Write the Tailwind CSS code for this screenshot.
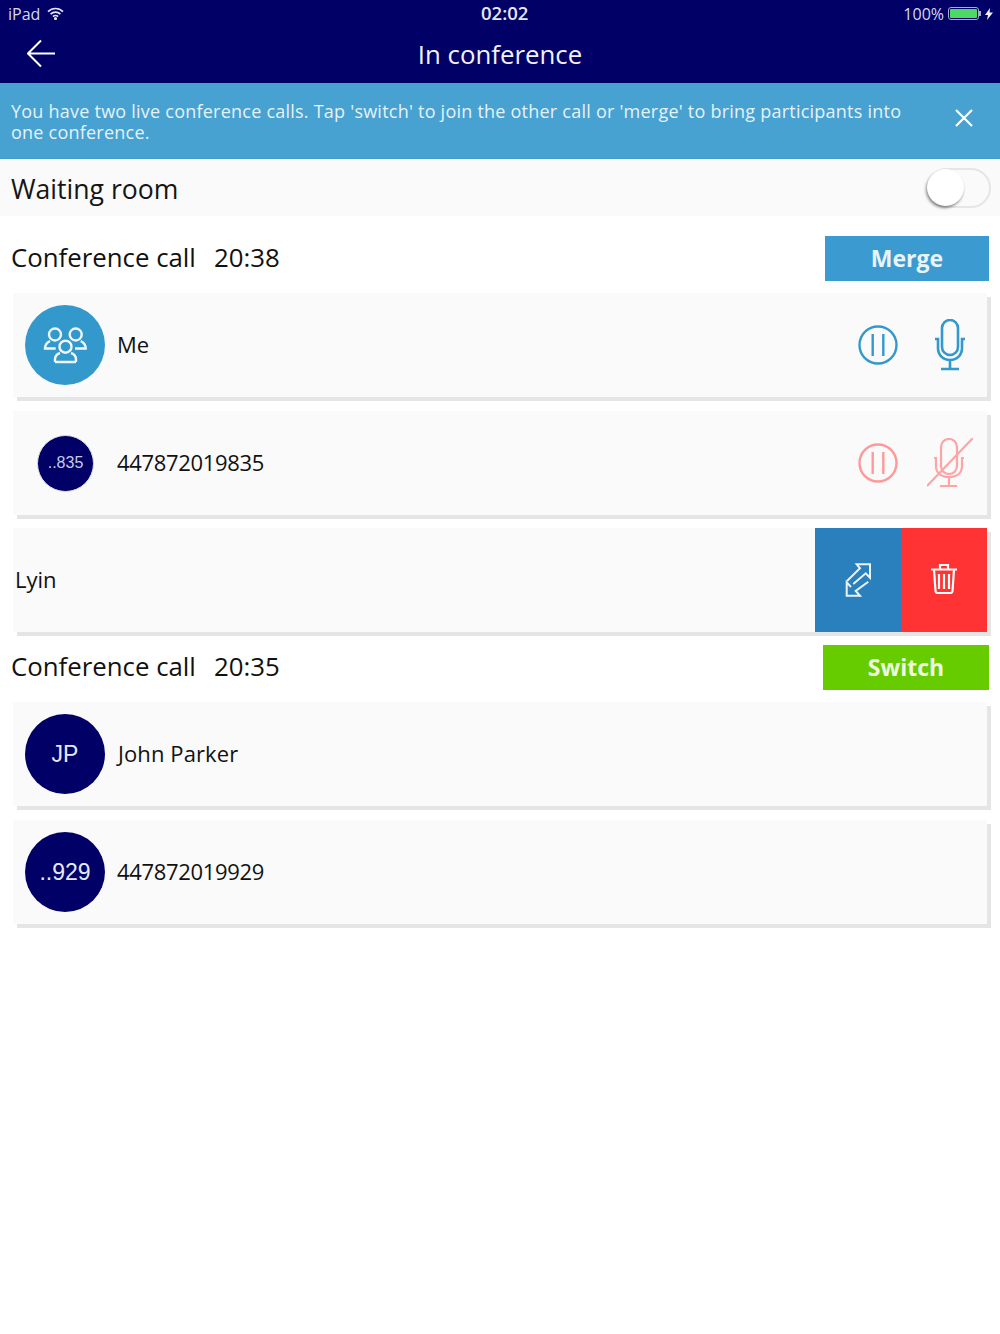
<!DOCTYPE html>
<html lang="en">
<head>
    <meta charset="UTF-8">
    <meta name="viewport" content="width=device-width, initial-scale=1.0">
    <title>In conference</title>
    <script src="https://cdn.jsdelivr.net/npm/@tailwindcss/browser@4"></script>
</head>
<body class="bg-white font-['Open_Sans',sans-serif] text-[#111]">
    <div class="w-[1000px] h-[1334px] overflow-hidden">
        <!-- header -->
        <div class="bg-[#000066] h-[83px] text-white">
            <div class="relative h-[27px] flex items-center justify-between pl-[8px] pr-[7px]">
                <div class="flex items-center gap-[7px] text-[16px] text-[#d8d8ea]">
                    <span>iPad</span>
                    <svg width="17" height="13" viewBox="0 0 17 13" fill="none" stroke="#e4e4f2" stroke-width="1.7"><path d="M1 4.6a10.6 10.6 0 0 1 15 0"/><path d="M3.6 7.2a7 7 0 0 1 9.800 0"/><path d="M6 9.600a3.400 3.400 0 0 1 5 0"/><circle cx="8.500" cy="11.600" r=".7"/></svg>
                </div>
                <div class="absolute left-[481px] top-[-1px] text-[18.5px] font-semibold text-[#e8e8f4]">02:02</div>
                <div class="flex items-center text-[16px] text-[#d8d8ea]">
                    <span class="mr-[4px]">100%</span>
                    <div class="w-[31px] h-[13px] rounded-[3px] border border-[#a9a9d0] p-[1px]"><div class="h-full rounded-[1px] bg-[#4cd964]"></div></div>
                    <div class="w-[2px] h-[5px] bg-[#a9a9d0] mr-[4px]"></div>
                    <svg width="8" height="12" viewBox="0 0 8 12" fill="#f0f0f8"><path d="M5 0 0 7h3l-1 5 6-7.500H4.600z"/></svg>
                </div>
            </div>
            <div class="relative h-[55px] flex items-center justify-center">
                <svg class="absolute left-[27px] top-[12px]" width="29" height="29" viewBox="0 0 29 29" fill="none" stroke="#fff" stroke-width="2"><path d="M1.500 14.500h26.500M14 1.500l-13 13 13 13"/></svg>
                <div class="text-[25.8px] text-[#f2f2f8]">In conference</div>
            </div>
        </div>
        <!-- banner -->
        <div class="bg-[#47a1d1] h-[76px] border-b border-[#3f9bcd] flex items-start justify-between pl-[11px] pr-[26px] pt-[18px]">
            <div class="w-[900px] text-[18px] tracking-[0.23px] leading-[21px] text-[#e6f2f9]">You have two live conference calls. Tap 'switch' to join the other call or 'merge' to bring participants into one conference.</div>
            <svg class="mt-[7px]" width="20" height="20" viewBox="0 0 20 20" stroke="#fff" stroke-width="2.2"><path d="M2 2l16 16M18 2 2 18"/></svg>
        </div>
        <!-- waiting room -->
        <div class="mt-px h-[56px] bg-[#fafafa] flex items-center justify-between pl-[11px] pr-[9px]">
            <div class="pt-[3px] text-[26.6px] text-[#151515]">Waiting room</div>
            <div class="relative w-[64px] h-[40px] rounded-full border-2 border-[#e6e6e6]">
                <div class="absolute left-[-2px] top-[-1px] w-[37px] h-[37px] rounded-full bg-white shadow-[-1px_2px_3px_rgba(0,0,0,0.45)]"></div>
            </div>
        </div>
        <!-- first conference -->
        <div class="h-[77px] flex items-start justify-between pl-[11px] pr-[11px] pt-[20px]">
            <div class="text-[25.8px] leading-[43px] flex gap-[18px]"><span>Conference call</span><span>20:38</span></div>
            <div class="w-[164px] h-[45px] bg-[#3b9bd0] text-[#e8f4fa] text-[23px] font-bold flex items-center justify-center">Merge</div>
        </div>
        <div class="ml-[13px] w-[974px] flex flex-col">
            <div class="h-[104px] bg-[#fafafa] shadow-[4px_4px_0_#e5e5e5] flex items-center pl-[12px] pr-[20px]">
                <div class="w-[80px] h-[80px] rounded-full bg-[#3399cc] flex items-center justify-center">
                    <svg width="45" height="37" viewBox="0 0 45 37" fill="none" stroke="#eef7fb" stroke-width="2.4"><circle cx="12" cy="7.500" r="6"/><circle cx="32.700" cy="7.500" r="6"/><circle cx="22.500" cy="19.700" r="6"/><path d="M12 35v-2.500c0-3 2-5.500 5-6.500M33 35v-2.500c0-3-2-5.500-5-6.500M12 35h21"/><path d="M7 14c-3 1.500-5 4-5 7.500h10.700M37.700 14c3 1.500 5 4 5 7.500H32"/></svg>
                </div>
                <div class="ml-[12px] text-[22px] leading-[28px] mb-[2px] flex-1">Me</div>
                <svg width="40" height="40" viewBox="0 0 40 40" fill="none" stroke="#3399cc" stroke-width="2.4"><circle cx="20" cy="20" r="18.500"/><path d="M14.700 9v22M25.300 9v22"/></svg>
                <svg class="ml-[35px]" width="34" height="52" viewBox="0 0 34 52" fill="none" stroke="#3399cc" stroke-width="2.6"><rect x="9" y="1" width="16" height="35" rx="8"/><path d="M2 20h3v9c0 7 5 12 12 12s12-5 12-12v-9h3M17 41v9M8 50h18"/></svg>
            </div>
            <div class="mt-[14px] h-[104px] bg-[#fafafa] shadow-[4px_4px_0_#e5e5e5] flex items-center pl-[24px] pr-[14px]">
                <div class="w-[57px] h-[57px] rounded-full bg-[#000066] border border-[#ddd] text-[#c9c9e6] text-[16px] font-['Liberation_Sans',sans-serif] flex items-center justify-center">..835</div>
                <div class="ml-[23px] text-[22px] tracking-[-0.32px] leading-[28px] mb-[2px] flex-1">447872019835</div>
                <svg width="40" height="40" viewBox="0 0 40 40" fill="none" stroke="#ff9999" stroke-width="2.4"><circle cx="20" cy="20" r="18.500"/><path d="M14.700 9v22M25.300 9v22"/></svg>
                <svg class="ml-[29px]" width="46" height="50" viewBox="0 0 46 50" fill="none" stroke="#ffa3a3" stroke-width="2.2"><rect x="14" y="1" width="16" height="35" rx="8"/><path d="M7 20h2v8c0 7 5 11 13 11s13-4 13-11v-8h2M22 39v9M13 48h17M46 0 0 48"/></svg>
            </div>
            <div class="mt-[13px] h-[104px] bg-[#fafafa] shadow-[4px_4px_0_#e5e5e5] flex items-stretch">
                <div class="flex-1 pl-[2px] pb-[2px] text-[22px] flex items-center">Lyin</div>
                <div class="w-[86px] bg-[#2a80bd] flex items-center justify-center">
                    <svg class="mt-[2px]" width="27" height="36" viewBox="0 0 27 36" fill="none" stroke="#eaf3f9" stroke-width="2"><path d="M2 18 15 5.300 11.700 1.300H25V14.700L20.700 10.300 8.300 21"/><path d="M23.300 18.700 10.700 28 15 32.700H1.700V19.300L6 24"/></svg>
                </div>
                <div class="w-[86px] bg-[#ff3333] flex items-center justify-center">
                    <svg class="mb-[2px]" width="26" height="30" viewBox="0 0 26 30" fill="none" stroke="#fff" stroke-width="2.2"><path d="M0 5.500h26M9 5V1h8v4M3 5.500l1.500 21.500q.2 2 2 2h13q1.800 0 2-2l1.500-21.500M8 10v15M13 10v15M18 10v15"/></svg>
                </div>
            </div>
        </div>
        <!-- second conference -->
        <div class="mt-[13px] h-[57px] flex items-start justify-between pl-[11px] pr-[11px]">
            <div class="text-[25.8px] leading-[43px] flex gap-[18px]"><span>Conference call</span><span>20:35</span></div>
            <div class="w-[166px] h-[45px] bg-[#66cc00] text-[#eefae0] text-[23px] font-bold flex items-center justify-center">Switch</div>
        </div>
        <div class="ml-[13px] w-[974px] flex flex-col">
            <div class="h-[104px] bg-[#fafafa] shadow-[4px_4px_0_#e5e5e5] flex items-center pl-[12px]">
                <div class="w-[80px] h-[80px] rounded-full bg-[#000066] text-[#e8e8f4] text-[23px] font-['Liberation_Sans',sans-serif] flex items-center justify-center">JP</div>
                <div class="ml-[13px] text-[22px] tracking-[0.1px] leading-[28px] mb-[3px]">John Parker</div>
            </div>
            <div class="mt-[14px] h-[104px] bg-[#fafafa] shadow-[4px_4px_0_#e5e5e5] flex items-center pl-[12px]">
                <div class="w-[80px] h-[80px] rounded-full bg-[#000066] text-[#e8e8f4] text-[23px] font-['Liberation_Sans',sans-serif] flex items-center justify-center">..929</div>
                <div class="ml-[12px] text-[22px] tracking-[-0.32px] leading-[28px] mb-[2px]">447872019929</div>
            </div>
        </div>
    </div>
</body>
</html>
